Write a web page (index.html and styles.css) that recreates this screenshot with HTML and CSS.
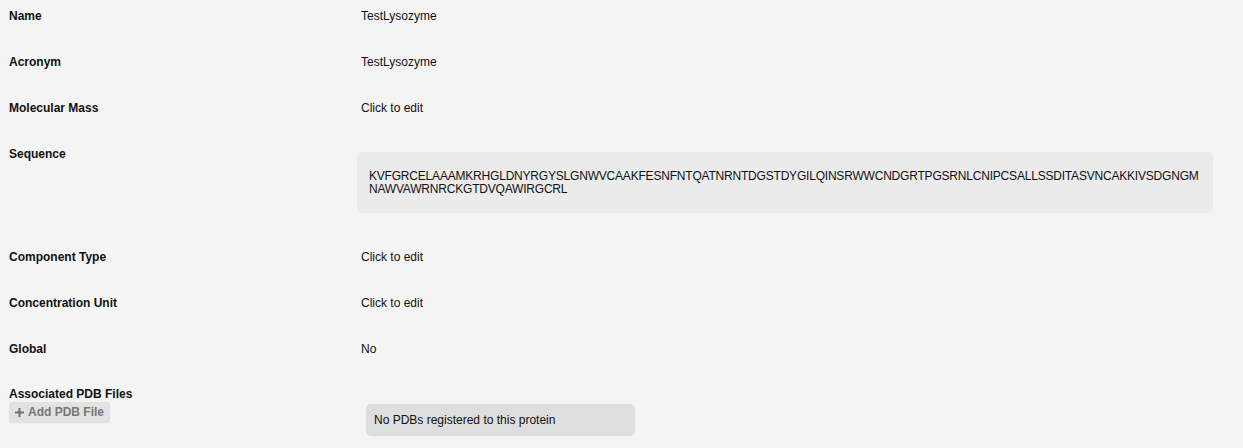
FILE: index.html
```html
<!DOCTYPE html>
<html>
<head>
<meta charset="utf-8">
<link rel="stylesheet" href="styles.css">
</head>
<body>
<div class="props">
  <div class="row">
    <div class="label">Name</div>
    <div class="value"><span class="val">TestLysozyme</span></div>
  </div>
  <div class="row">
    <div class="label">Acronym</div>
    <div class="value"><span class="val">TestLysozyme</span></div>
  </div>
  <div class="row">
    <div class="label">Molecular Mass</div>
    <div class="value"><span class="val">Click to edit</span></div>
  </div>
  <div class="row">
    <div class="label">Sequence</div>
    <div class="value">
      <div class="seq">KVFGRCELAAAMKRHGLDNYRGYSLGNWVCAAKFESNFNTQATNRNTDGSTDYGILQINSRWWCNDGRTPGSRNLCNIPCSALLSSDITASVNCAKKIVSDGNGM<br>NAWVAWRNRCKGTDVQAWIRGCRL</div>
    </div>
  </div>
  <div class="row">
    <div class="label">Component Type</div>
    <div class="value"><span class="val">Click to edit</span></div>
  </div>
  <div class="row">
    <div class="label">Concentration Unit</div>
    <div class="value"><span class="val">Click to edit</span></div>
  </div>
  <div class="row">
    <div class="label">Global</div>
    <div class="value"><span class="val">No</span></div>
  </div>
  <div class="row last">
    <div class="label">
      <div>Associated PDB Files</div>
      <button class="btn"><svg width="9" height="9" viewBox="0 0 9 9"><path d="M3.5 0h2v3.5H9v2H5.5V9h-2V5.5H0v-2h3.5z" fill="#6f6f6f"/></svg>Add PDB File</button>
    </div>
    <div class="value">
      <div class="empty">No PDBs registered to this protein</div>
    </div>
  </div>
</div>
</body>
</html>
```
FILE: styles.css
```css
html, body {
  margin: 0;
  padding: 0;
  background: #f4f4f4;
}
body {
  font-family: "Liberation Sans", Arial, sans-serif;
  font-size: 12px;
  line-height: 14px;
  color: #111;
}
.props {
  padding: 0 30px 0 9px;
}
.row {
  display: flex;
  padding: 9px 0 23px;
}
.label {
  width: 348px;
  flex: none;
  font-weight: bold;
  color: #111;
}
.value {
  flex: 1;
  min-width: 0;
}
.val {
  padding-left: 4px;
}
.seq {
  margin: 5px 0;
  background: #ebebeb;
  border-radius: 5px;
  padding: 18px 12px 17px;
  line-height: 13px;
  letter-spacing: -0.2px;
  color: #111;
}
.row.last {
  padding-top: 8px;
  padding-bottom: 0;
}
.btn {
  display: flex;
  align-items: center;
  gap: 4px;
  margin-top: 1px;
  height: 20px;
  padding: 0 6px 0 6px;
  border: none;
  border-radius: 3px;
  background: #e2e2e2;
  box-shadow: 0 1px 1px rgba(0,0,0,0.08);
  font-family: "Liberation Sans", Arial, sans-serif;
  font-size: 12px;
  font-weight: bold;
  color: #777;
}
.empty {
  margin: 17px 0 0 9px;
  width: 269px;
  box-sizing: border-box;
  background: #dedede;
  border-radius: 5px;
  padding: 9px 8px 9px;
  color: #111;
}
```
